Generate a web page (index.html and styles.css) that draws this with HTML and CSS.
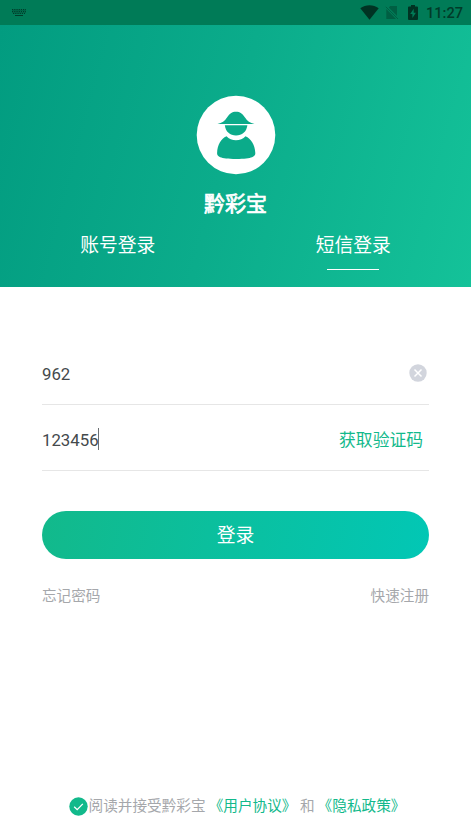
FILE: index.html
```html
<!DOCTYPE html>
<html lang="zh-CN">
<head>
<meta charset="utf-8">
<title>黔彩宝</title>
<link rel="stylesheet" href="styles.css">
</head>
<body>
<div class="status">
  <svg class="keyboard" width="14" height="8" viewBox="0 0 14 8"><path d="M0 .5h14M0 2.500h14M1 4.500h12" stroke="#003d2a" stroke-dasharray="1.300 .9"/><path d="M0 1.500h14M0 3.500h14" stroke="#003d2a" opacity=".35"/><path d="M3 6.500h8" stroke="#003d2a"/></svg>
  <div class="status-right">
    <svg class="wifi" width="19" height="15" viewBox="0 0 19 15"><path d="M.3 3.300C5.600-.9 13.400-.9 18.700 3.300L9.500 14.700z"/></svg>
    <svg class="sim" width="14" height="15" viewBox="0 0 14 15"><path d="M5.200 1H12v10L3.800 2.400zM1.300 4L11 14H1.300z" fill="#005f43"/><path d="M.8 1.800L13 14" stroke="#005f43" stroke-width="1"/></svg>
    <svg class="battery" width="10" height="15" viewBox="0 0 10 15"><path fill-rule="evenodd" d="M3 0h4v1.500h2q1 0 1 1V14q0 1-1 1H1q-1 0-1-1V2.500q0-1 1-1h2zM5.700 3.700L2.200 9h2.200v4L7.900 7.700H5.700z"/></svg>
    <span class="time">11:27</span>
  </div>
</div>
<header class="header">
  <svg class="logo" width="80" height="80" viewBox="0 0 80 80"><circle cx="40" cy="40" r="39.300" fill="#fff"/><g fill="#0bab8a"><path d="M21.500 29Q28 27.500 31 22.500C33.500 18.500 36 16.700 40 16.700S46.500 18.500 49 22.500Q52 27.500 58.500 29z"/><path d="M28.800 30.300h22.600C50.500 37 46 40.500 40 40.500S29.700 37 28.800 30.300z"/><path d="M30.500 41.300C35 46.500 45 46.500 49.500 41.300C55 43.500 59 50 59.300 58C59.400 61 57 64 40.200 64S21 61 21.100 58C21.400 50 25 43.500 30.500 41.300z"/></g></svg>
  <h1 class="brand">黔彩宝</h1>
  <nav class="tabs">
    <span class="tab">账号登录</span>
    <span class="tab active">短信登录</span>
  </nav>
</header>
<main class="form">
  <div class="field phone">
    <span class="number">962</span>
    <svg class="clear" width="18" height="18" viewBox="0 0 18 18"><circle cx="9" cy="9" r="8.700" fill="#d2d5dd"/><path d="M5.500 5.500l7 7M12.500 5.500l-7 7" stroke="#fff" stroke-width="1.500"/></svg>
  </div>
  <div class="field code">
    <span class="value">123456<i class="caret"></i></span>
    <span class="get-code">获取验证码</span>
  </div>
  <div class="submit">登录</div>
  <div class="links"><span>忘记密码</span><span>快速注册</span></div>
</main>
<footer class="agreement">
  <svg class="check" width="19" height="19" viewBox="0 0 19 19"><circle cx="9.500" cy="9.500" r="9.200" fill="#12b98b"/><path d="M5.200 9.700l3 2.900 5.600-5.700" fill="none" stroke="#fff" stroke-width="1.300"/></svg>
  <span class="accept">阅读并接受黔彩宝</span>
  <span class="policy user">《用户协议》</span>
  <span>和</span>
  <span class="policy">《隐私政策》</span>
</footer>
</body>
</html>
```
FILE: styles.css
```css
* { box-sizing: border-box; }
body {
  margin: 0;
  height: 837px;
  display: flex;
  flex-direction: column;
  overflow: hidden;
  background: #fff;
  font-family: Roboto, "Noto Sans CJK SC", sans-serif;
  color: #44494c;
}
svg { display: block; flex: none; }
.status {
  height: 25px;
  flex: none;
  display: flex;
  justify-content: space-between;
  align-items: center;
  padding: 0 8px 0 12px;
  background: #007b57;
}
.status-right { display: flex; align-items: center; fill: #003323; }
.sim { margin-left: 6px; }
.battery { margin-left: 9px; }
.time {
  margin-left: 8px;
  width: 37px;
  font-size: 14.600px;
  line-height: 25px;
  font-weight: 500;
  color: #003b29;
  padding-top: 1px;
}
.header {
  height: 262px;
  flex: none;
  display: flex;
  flex-direction: column;
  align-items: center;
  padding-top: 70px;
  background: linear-gradient(105deg, #029c80 0%, #0bac8b 48%, #14c299 100%);
  color: #fff;
}
.brand {
  margin: 13px 0 0;
  font-size: 21px;
  line-height: 32px;
  font-weight: 400;
  -webkit-text-stroke: .7px #fff;
}
.tabs { width: 100%; display: flex; margin-top: 7px; }
.tab {
  flex: 1;
  display: flex;
  flex-direction: column;
  align-items: center;
  font-size: 18.800px;
  line-height: 38px;
}
.active::after {
  content: "";
  width: 52px;
  height: 1px;
  margin-top: 4px;
  background: #fff;
}
.form { margin: 0 42px; padding-top: 56px; width: 387px; }
.field {
  display: flex;
  justify-content: space-between;
  align-items: center;
  border-bottom: 1px solid #e6e6e6;
  font-size: 16.800px;
}
.phone { height: 62px; padding: 0 3px 0 0; }
.clear { margin: -1px -.5px 0 0; }
.code { height: 66px; padding-right: 6px; padding-top: 2px; }
.value { display: flex; align-items: center; padding-top: 3px; }
.caret { width: 1px; height: 22px; margin: -2px 0 0 -1px; background: #6c7073; }
.get-code { color: #12b98b; }
.submit {
  margin-top: 40px;
  height: 48px;
  border-radius: 24px;
  background: linear-gradient(100deg, #12b98b, #02c7b5);
  color: #fff;
  font-size: 18.800px;
  line-height: 50px;
  text-align: center;
}
.links {
  margin-top: 26px;
  display: flex;
  justify-content: space-between;
  font-size: 14.600px;
  line-height: 23px;
  color: #a5a7ab;
}
.agreement {
  margin-top: auto;
  margin-bottom: 19px;
  padding-left: 69px;
  display: flex;
  align-items: center;
  white-space: nowrap;
  font-size: 14.650px;
  line-height: 23px;
  color: #a5a7ab;
}
.accept { margin-left: .5px; }
.policy { color: #12b98b; margin-left: 3px; }
.user { margin-right: 3.500px; }
```
